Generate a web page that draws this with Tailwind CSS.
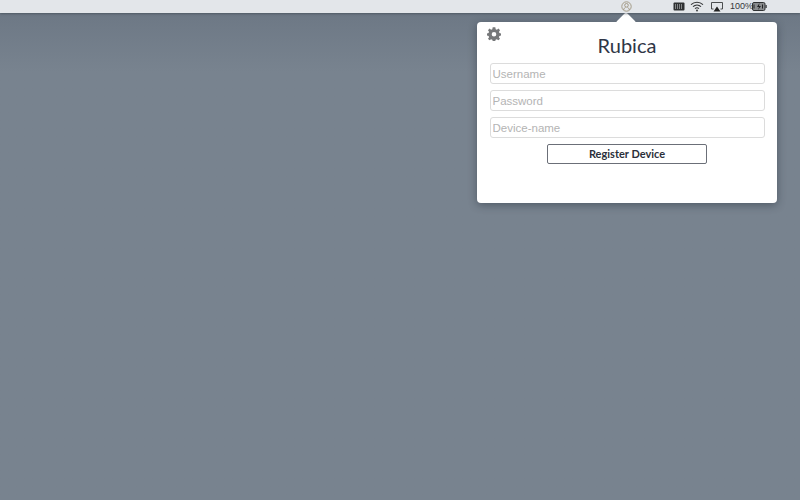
<!DOCTYPE html>
<html>
<head>
<meta charset="utf-8">
<script src="https://cdn.jsdelivr.net/npm/@tailwindcss/browser@4"></script>
</head>
<body class="m-0">
<div class="w-[800px] h-[500px] overflow-hidden flex flex-col bg-[#78838f] font-['Liberation_Sans',sans-serif]">
  <div class="h-[13px] shrink-0 bg-[#e3e6ea] flex items-center relative shadow-[0_1px_2px_rgba(50,60,70,0.5)] z-10">
    <svg class="absolute left-[621px] top-[1px]" width="11" height="11" viewBox="0 0 11 11" fill="none" stroke="#a39a86" stroke-width="1"><circle cx="5.5" cy="5.5" r="4.7"/><circle cx="5.5" cy="4.3" r="1.8"/><path d="M2.6 9 C3 7 4 6.6 4.6 6.4 M8.4 9 C8 7 7 6.6 6.4 6.4"/></svg>
    <svg class="absolute left-[673px] top-[2px]" width="12" height="9" viewBox="0 0 12 9"><rect x="0.5" y="0.5" width="11" height="8" rx="1" fill="#2f3133"/><path d="M2.5 2v5M4.5 2v5M6.5 2v5M8.5 2v5" stroke="#9a9da0" stroke-width="0.8"/></svg>
    <svg class="absolute left-[690px] top-[1px]" width="14" height="11" viewBox="0 0 14 11" fill="none" stroke="#2f3133" stroke-width="1.1"><path d="M1 3.6C4.5 0.4 9.5 0.4 13 3.6"/><path d="M3 5.6C5.3 3.6 8.7 3.6 11 5.6"/><path d="M5 7.6C6.2 6.6 7.8 6.6 9 7.6"/><circle cx="7" cy="9.5" r="0.9" fill="#2f3133" stroke="none"/></svg>
    <svg class="absolute left-[711px] top-[2px]" width="12" height="10" viewBox="0 0 12 10" fill="none"><path d="M2.5 7H0.5V0.5H11.5V7H9.5" stroke="#3a3c3e" stroke-width="0.9"/><path d="M6 4.5L9.5 9.5H2.5Z" fill="#222"/></svg>
    <span class="absolute left-[730px] top-[1px] text-[9px] leading-[11px] text-[#34363a] whitespace-nowrap">100%</span>
    <svg class="absolute left-[752px] top-[2px]" width="15" height="9" viewBox="0 0 15 9"><rect x="0.5" y="0.5" width="12.5" height="8" rx="1.5" fill="#8a8c8e" stroke="#2f3133"/><rect x="13.5" y="3" width="1.2" height="3" fill="#2f3133"/><path d="M7.5 1L5 5H7L6 8L9 4H7Z" fill="#1f2022"/><path d="M2 2.5V6.5M10.5 2.5V6.5" stroke="#1f2022"/></svg>
  </div>
  <div class="flex-1 flex justify-end items-start pt-[9px] pr-[23px] bg-gradient-to-b from-[#6d7885] to-[#78838f] to-[12%]">
    <div class="relative w-[300px] h-[181px] bg-white rounded-[4px] shadow-[0_2px_8px_rgba(30,40,50,0.45)] flex flex-col items-center pt-[11px]">
      <div class="absolute left-[142px] top-[-7px] w-[14px] h-[14px] bg-white rotate-45 rounded-[1px]"></div>
      <svg class="absolute left-[10px] top-[5px]" width="14" height="14" viewBox="0 0 14 14"><path fill="#76787a" fill-rule="evenodd" d="M5.7 0.3H8.3L8.7 2.2 9.9 2.7 11.5 1.6 13 3.2 12 4.8 12.4 6 14 6.4V8.6L12.4 9 11.9 10.2 13 11.8 11.4 13.3 9.8 12.3 8.6 12.8 8.3 14H5.7L5.3 12.8 4.1 12.3 2.5 13.3 1 11.8 2.1 10.2 1.6 9 0 8.6V6.4L1.6 6 2 4.8 1 3.2 2.5 1.6 4.1 2.7 5.3 2.2ZM7 4.9A2.3 2.3 0 1 0 7 9.5 2.3 2.3 0 1 0 7 4.9Z"/></svg>
      <h1 class="relative h-[30px] font-['Lato',sans-serif] text-[20px] leading-[24px] font-normal text-[#2f3646]">Rubica</h1>
      <div class="w-[275px] flex flex-col gap-[6px]">
        <input class="block w-full h-[21px] px-[2px] border border-[#dcdcdc] rounded-[3px] outline-none text-[11.5px] placeholder:text-[#b4b4b4] bg-white" placeholder="Username">
        <input class="block w-full h-[21px] px-[2px] border border-[#dcdcdc] rounded-[3px] outline-none text-[11.5px] placeholder:text-[#b4b4b4] bg-white" placeholder="Password">
        <input class="block w-full h-[21px] px-[2px] border border-[#dcdcdc] rounded-[3px] outline-none text-[11.5px] placeholder:text-[#b4b4b4] bg-white" placeholder="Device-name">
      </div>
      <button class="mt-[6px] w-[160px] h-[20px] border border-[#6b6f78] rounded-[2px] bg-white font-['Lato',sans-serif] font-bold text-[11px] leading-[18px] text-[#2b2f3a]">Register Device</button>
    </div>
  </div>
</div>
</body>
</html>
